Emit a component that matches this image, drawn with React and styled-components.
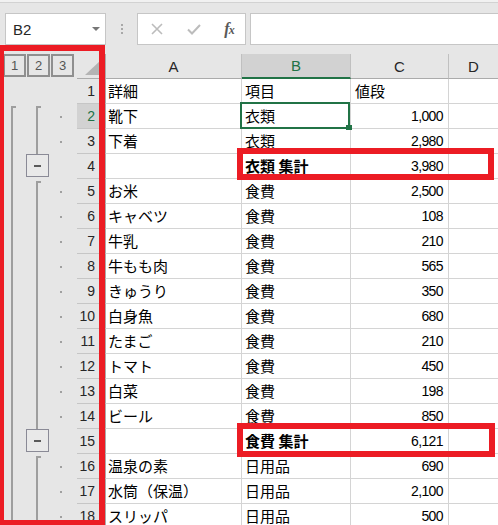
import React from 'react';
import styled, { createGlobalStyle } from 'styled-components';

const GREEN = '#217346';
const RED = '#ec1c24';
const JP = `"Noto Sans CJK JP", "Noto Sans", sans-serif`;
const LAT = `"Liberation Sans", Arial, sans-serif`;

const GlobalStyle = createGlobalStyle`
  html, body { margin: 0; padding: 0; background: #e6e6e6; }
  body { font-family: ${LAT}; }
`;

const Window = styled.div`
  position: relative;
  width: 498px;
  height: 525px;
  overflow: hidden;
  background: #e6e6e6;
`;

const RibbonEdge = styled.div`
  height: 2px;
  background: #f1f1f1;
  border-bottom: 1px solid #d2d2d2;
`;

const FormulaBar = styled.div`
  box-sizing: border-box;
  height: 51px;
  padding-top: 10px;
  display: flex;
  align-items: flex-start;
`;

const Box = styled.div`
  box-sizing: border-box;
  flex-shrink: 0;
  height: 32px;
  background: #fff;
  border: 1px solid #c6c6c6;
  display: flex;
  align-items: center;
`;

const NameBox = styled(Box)`
  margin-left: 5px;
  width: 101px;
  padding: 0 5px 0 7px;
  justify-content: space-between;
  font-family: ${LAT};
  font-size: 15px;
  color: #262626;
`;

const DropArrow = styled.span`
  width: 0;
  height: 0;
  border-left: 4px solid transparent;
  border-right: 4px solid transparent;
  border-top: 4px solid #777;
`;

const Grip = styled.div`
  flex-shrink: 0;
  width: 31px;
  height: 32px;
  display: flex;
  flex-direction: column;
  align-items: center;
  justify-content: center;
  gap: 2px;
  & > span {
    width: 2px;
    height: 2px;
    background: #a8a8a8;
  }
`;

const FxBox = styled(Box)`
  width: 109px;
  display: grid;
  grid-template-columns: 38px 35px 36px;
  justify-items: center;
`;

const Fx = styled.span`
  font-family: "Liberation Serif", "Times New Roman", serif;
  font-style: italic;
  font-weight: bold;
  font-size: 16px;
  color: #595959;
  letter-spacing: -1px;
  & > small { font-size: 12px; }
`;

const FormulaInput = styled(Box)`
  margin-left: 4px;
  width: 300px;
`;

const Sheet = styled.div`
  display: grid;
  grid-template-columns: 77px 29px 136px 109px 98px 49px;
  grid-auto-rows: 25px;
`;

const LevelButtons = styled.div`
  display: flex;
  gap: 1px;
  padding-left: 3px;
  align-items: flex-start;
`;

const LevelButton = styled.div`
  box-sizing: border-box;
  width: 23px;
  height: 23px;
  border: 2px solid #8f8f8f;
  display: flex;
  align-items: center;
  justify-content: center;
  font-family: ${LAT};
  font-size: 13px;
  color: #555;
`;

const Corner = styled.div`
  box-sizing: border-box;
  border-right: 1px solid #ababab;
  border-bottom: 1px solid #ababab;
  display: flex;
  align-items: flex-end;
  justify-content: flex-end;
  padding: 0 4px 3px 0;
`;

const ColHeader = styled.div`
  box-sizing: border-box;
  display: flex;
  align-items: center;
  justify-content: center;
  font-family: ${LAT};
  font-size: 15px;
  color: ${p => (p.$active ? GREEN : '#262626')};
  background: ${p => (p.$active ? '#d2d2d2' : '#e6e6e6')};
  border-right: ${p => (p.$last ? 'none' : '1px solid #c0c0c0')};
  border-bottom: ${p => (p.$active ? `2px solid ${GREEN}` : '1px solid #ababab')};
`;

const Gutter = styled.div`
  display: grid;
  grid-template-columns: 26px 23px 28px;
  background: #e6e6e6;
`;

const Slot = styled.div`
  display: flex;
  align-items: ${p => (p.$center ? 'center' : 'stretch')};
`;

const Bracket = styled.div`
  box-sizing: border-box;
  margin-left: ${p => p.$offset}px;
  margin-top: ${p => (p.$start ? 2 : 0)}px;
  width: 5px;
  border-left: 2px solid #9e9e9e;
  border-top: ${p => (p.$start ? '2px solid #9e9e9e' : 'none')};
`;

const MinusButton = styled.div`
  box-sizing: border-box;
  width: 23px;
  height: 23px;
  border: 1px solid #8a8a96;
  background: #e9e9e9;
  display: flex;
  align-items: center;
  justify-content: center;
  &::before {
    content: '';
    width: 7px;
    height: 2px;
    background: #5a5a5a;
  }
`;

const Dot = styled.span`
  margin-left: 11px;
  width: 2px;
  height: 2px;
  background: #a0a0a0;
`;

const RowHeader = styled.div`
  box-sizing: border-box;
  display: flex;
  align-items: center;
  justify-content: flex-end;
  padding: 0 10px 1px 0;
  font-family: ${LAT};
  font-size: 14px;
  color: ${p => (p.$active ? GREEN : '#262626')};
  background: ${p => (p.$active ? '#d2d2d2' : '#e6e6e6')};
  border-right: 1px solid #ababab;
  border-bottom: 1px solid #c6c6c6;
`;

const Cell = styled.div`
  box-sizing: border-box;
  position: relative;
  display: flex;
  align-items: center;
  justify-content: ${p => (p.$num ? 'flex-end' : 'flex-start')};
  padding: 0 5px 1px ${p => p.$pl}px;
  background: #fff;
  border-right: ${p => (p.$last ? 'none' : '1px solid #d4d4d4')};
  border-bottom: 1px solid #d4d4d4;
  white-space: nowrap;
  line-height: 1;
  color: #000;
  font-family: ${p => (p.$num ? LAT : JP)};
  font-size: ${p => (p.$num ? '14px' : '15px')};
  letter-spacing: ${p => (p.$num ? '-0.6px' : '0')};
  font-weight: ${p => (p.$bold ? 700 : 400)};

  ${p =>
    p.$selected &&
    `
    &::after {
      content: '';
      position: absolute;
      left: -2px;
      top: -2px;
      right: 0;
      bottom: -1px;
      border: 2px solid ${GREEN};
      z-index: 2;
    }
    &::before {
      content: '';
      position: absolute;
      right: -2px;
      bottom: -2px;
      width: 6px;
      height: 5px;
      background: ${GREEN};
      z-index: 3;
    }
  `}
`;

const Highlight = styled.div`
  position: absolute;
  box-sizing: border-box;
  border: 6px solid ${RED};
  z-index: 5;
  pointer-events: none;
  left: ${p => p.$x}px;
  top: ${p => p.$y}px;
  width: ${p => p.$w}px;
  height: ${p => p.$h}px;
`;

const rows = [
  { n: 1, a: '詳細', b: '項目', c: '値段' },
  { n: 2, a: '靴下', b: '衣類', c: '1,000', l1: 'start', l2: 'start', dot: true },
  { n: 3, a: '下着', b: '衣類', c: '2,980', l1: 'line', l2: 'line', dot: true },
  { n: 4, a: '', b: '衣類 集計', c: '3,980', bold: true, l1: 'line', l2: 'minus' },
  { n: 5, a: 'お米', b: '食費', c: '2,500', l1: 'line', l2: 'start', dot: true },
  { n: 6, a: 'キャベツ', b: '食費', c: '108', l1: 'line', l2: 'line', dot: true },
  { n: 7, a: '牛乳', b: '食費', c: '210', l1: 'line', l2: 'line', dot: true },
  { n: 8, a: '牛もも肉', b: '食費', c: '565', l1: 'line', l2: 'line', dot: true },
  { n: 9, a: 'きゅうり', b: '食費', c: '350', l1: 'line', l2: 'line', dot: true },
  { n: 10, a: '白身魚', b: '食費', c: '680', l1: 'line', l2: 'line', dot: true },
  { n: 11, a: 'たまご', b: '食費', c: '210', l1: 'line', l2: 'line', dot: true },
  { n: 12, a: 'トマト', b: '食費', c: '450', l1: 'line', l2: 'line', dot: true },
  { n: 13, a: '白菜', b: '食費', c: '198', l1: 'line', l2: 'line', dot: true },
  { n: 14, a: 'ビール', b: '食費', c: '850', l1: 'line', l2: 'line', dot: true },
  { n: 15, a: '', b: '食費 集計', c: '6,121', bold: true, l1: 'line', l2: 'minus' },
  { n: 16, a: '温泉の素', b: '日用品', c: '690', l1: 'line', l2: 'start', dot: true },
  { n: 17, a: '水筒（保温）', b: '日用品', c: '2,100', l1: 'line', l2: 'line', dot: true },
  { n: 18, a: 'スリッパ', b: '日用品', c: '500', l1: 'line', l2: 'line', dot: true },
];

const isNum = s => /^[\d,]+$/.test(s);

function OutlineCell({ l1, l2, dot }) {
  return (
    <Gutter>
      <Slot>{l1 && <Bracket $offset={11} $start={l1 === 'start'} />}</Slot>
      <Slot>
        {l2 === 'minus' ? (
          <MinusButton />
        ) : (
          l2 && <Bracket $offset={10} $start={l2 === 'start'} />
        )}
      </Slot>
      <Slot $center>{dot && <Dot />}</Slot>
    </Gutter>
  );
}

export default function App() {
  return (
    <>
      <GlobalStyle />
      <Window>
        <RibbonEdge />
        <FormulaBar>
          <NameBox>
            <span>B2</span>
            <DropArrow />
          </NameBox>
          <Grip>
            <span />
            <span />
            <span />
          </Grip>
          <FxBox>
            <svg width="12" height="12" viewBox="0 0 12 12">
              <path d="M1 1 L11 11 M11 1 L1 11" stroke="#bcbcbc" strokeWidth="1.6" fill="none" />
            </svg>
            <svg width="14" height="11" viewBox="0 0 14 11">
              <path d="M1 5.5 L5 9.5 L13 1" stroke="#bcbcbc" strokeWidth="2" fill="none" />
            </svg>
            <Fx>
              f<small>x</small>
            </Fx>
          </FxBox>
          <FormulaInput />
        </FormulaBar>
        <Sheet>
          <LevelButtons>
            <LevelButton>1</LevelButton>
            <LevelButton>2</LevelButton>
            <LevelButton>3</LevelButton>
          </LevelButtons>
          <Corner>
            <svg width="16" height="15" viewBox="0 0 16 15">
              <polygon points="16,0 16,15 0,15" fill="#b4b4b4" />
            </svg>
          </Corner>
          <ColHeader>A</ColHeader>
          <ColHeader $active>B</ColHeader>
          <ColHeader>C</ColHeader>
          <ColHeader $last>D</ColHeader>
          {rows.map(r => (
            <React.Fragment key={r.n}>
              <OutlineCell l1={r.l1} l2={r.l2} dot={r.dot} />
              <RowHeader $active={r.n === 2}>{r.n}</RowHeader>
              <Cell $pl={2}>{r.a}</Cell>
              <Cell $pl={3} $bold={r.bold} $selected={r.n === 2}>
                {r.b}
              </Cell>
              <Cell $pl={4} $num={isNum(r.c)}>
                {r.c}
              </Cell>
              <Cell $pl={3} $last />
            </React.Fragment>
          ))}
        </Sheet>
        <Highlight $x={-2} $y={45} $w={107} $h={481} />
        <Highlight $x={237} $y={148} $w={257} $h={32} />
        <Highlight $x={237} $y={423} $w={258} $h={34} />
      </Window>
    </>
  );
}
